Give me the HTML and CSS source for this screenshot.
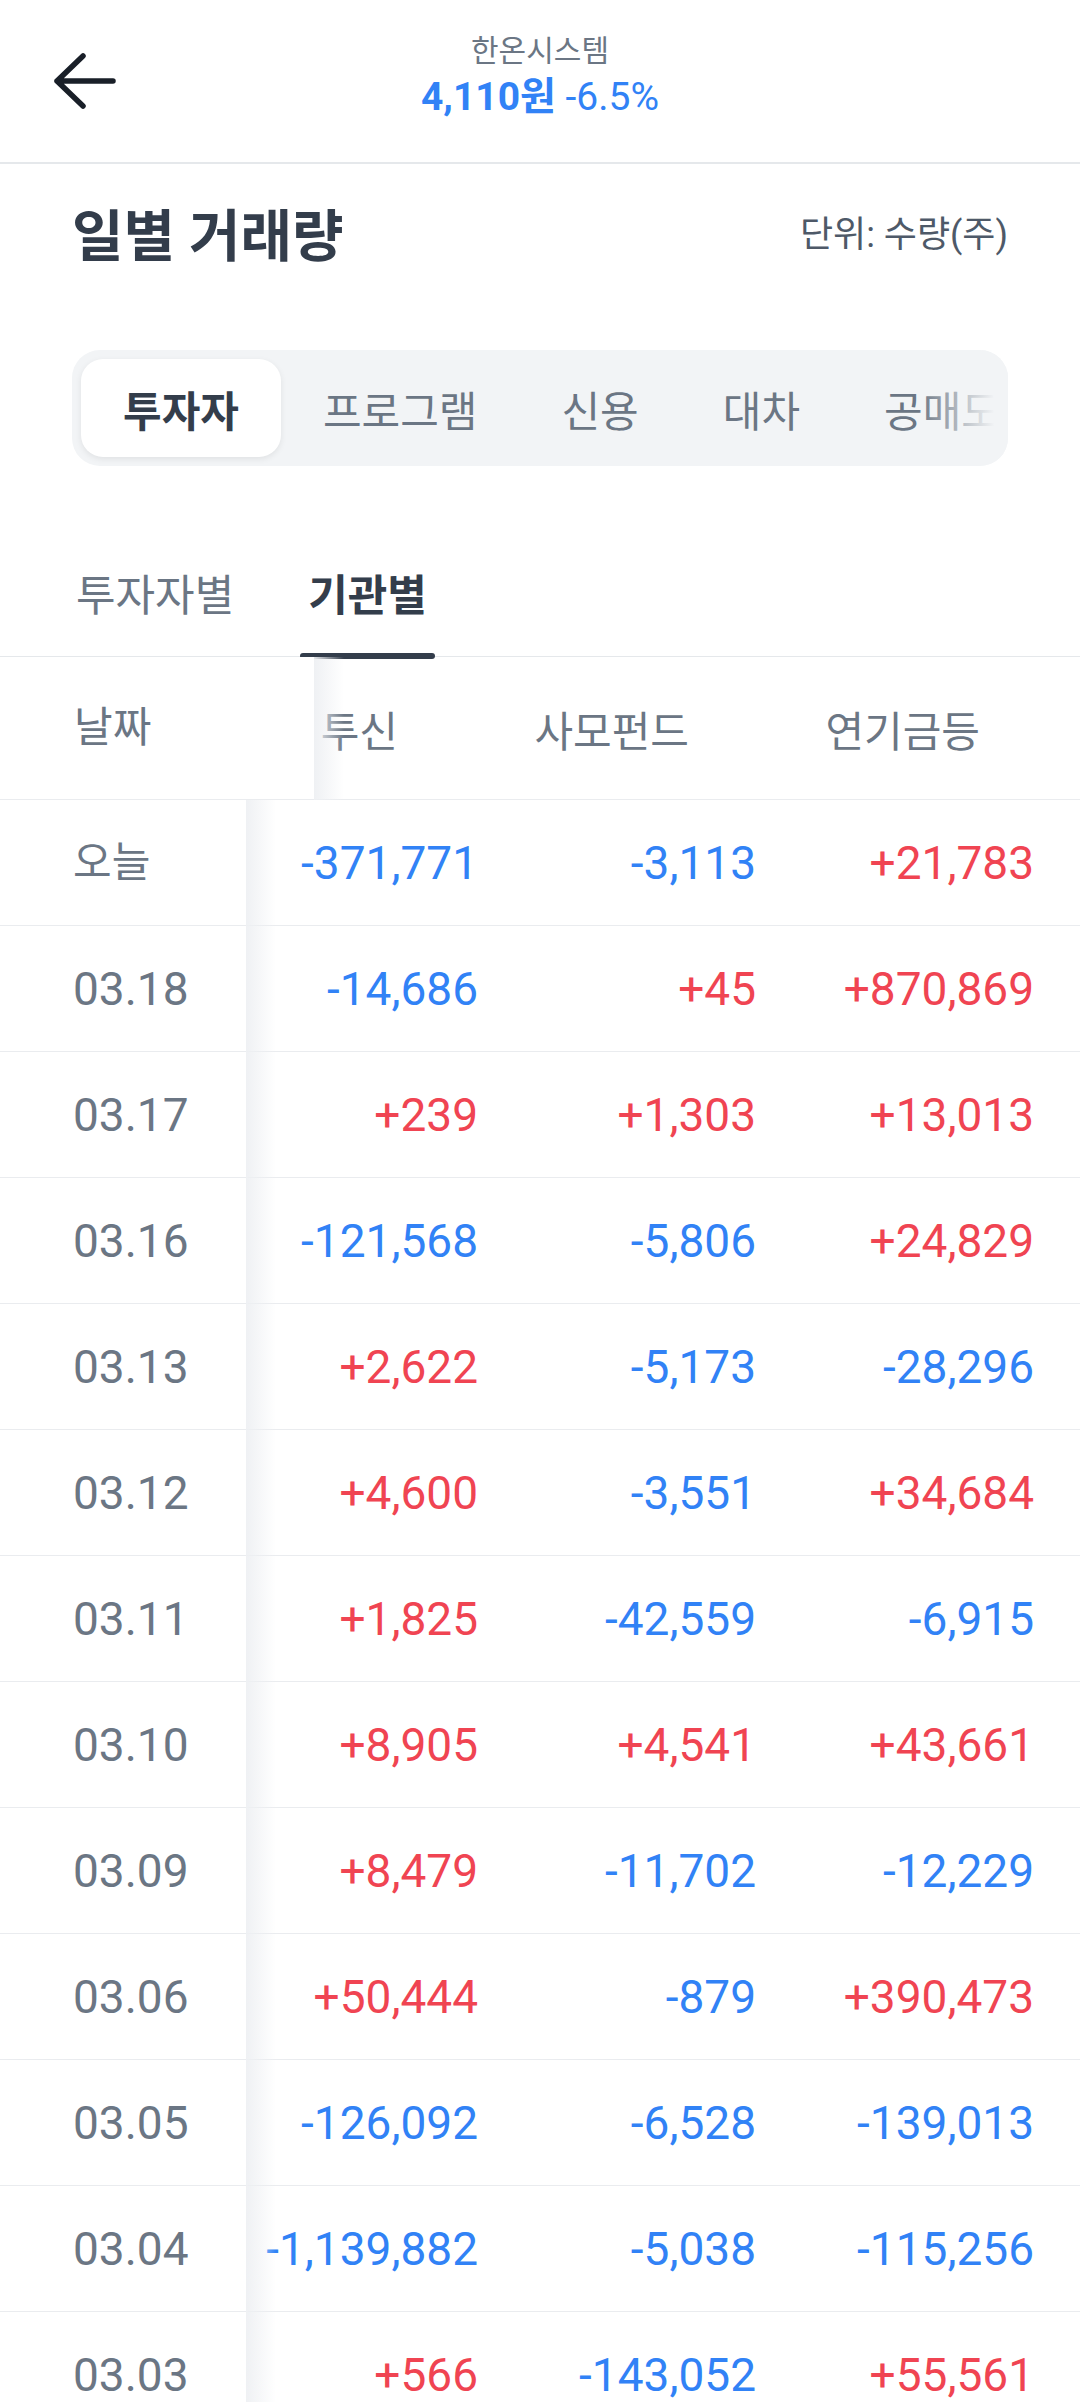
FILE: index.html
```html
<!DOCTYPE html>
<html lang="ko">
<head>
    <meta charset="UTF-8">
    <meta name="viewport" content="width=device-width, initial-scale=1.0">
    <title>한온시스템 - 일별 거래량</title>
    <link rel="stylesheet" href="styles.css">
</head>
<body>
    <header class="topbar">
        <div class="topbar-left">
            <svg class="back" width="64" height="58" viewBox="0 0 64 58">
                <path d="M29 4 L3 29 L29 54 M3 29 H59" fill="none" stroke="#191f28" stroke-width="5.5" stroke-linecap="round" stroke-linejoin="round"/>
            </svg>
        </div>
        <div class="topbar-title">
            <div class="stock-name">한온시스템</div>
            <div class="stock-price"><b>4,110원</b> -6.5%</div>
        </div>
        <div></div>
    </header>

    <section class="title-row">
        <h1>일별 거래량</h1>
        <span class="unit">단위: 수량(주)</span>
    </section>

    <div class="segment">
        <div class="segment-list">
            <button class="seg active">투자자</button>
            <button class="seg">프로그램</button>
            <button class="seg">신용</button>
            <button class="seg">대차</button>
            <button class="seg">공매도</button>
        </div>
    </div>

    <nav class="subtabs">
        <span class="subtab">투자자별</span>
        <span class="subtab active">기관별</span>
    </nav>

    <div class="table">
        <div class="thead">
            <div class="date">날짜</div>
            <div class="cols">
                <span>투신</span>
                <span>사모펀드</span>
                <span>연기금등</span>
            </div>
        </div>

        <div class="row">
            <div class="date today">오늘</div>
            <div class="vals"><span class="down">-371,771</span><span class="down">-3,113</span><span class="up">+21,783</span></div>
        </div>
        <div class="row">
            <div class="date">03.18</div>
            <div class="vals"><span class="down">-14,686</span><span class="up">+45</span><span class="up">+870,869</span></div>
        </div>
        <div class="row">
            <div class="date">03.17</div>
            <div class="vals"><span class="up">+239</span><span class="up">+1,303</span><span class="up">+13,013</span></div>
        </div>
        <div class="row">
            <div class="date">03.16</div>
            <div class="vals"><span class="down">-121,568</span><span class="down">-5,806</span><span class="up">+24,829</span></div>
        </div>
        <div class="row">
            <div class="date">03.13</div>
            <div class="vals"><span class="up">+2,622</span><span class="down">-5,173</span><span class="down">-28,296</span></div>
        </div>
        <div class="row">
            <div class="date">03.12</div>
            <div class="vals"><span class="up">+4,600</span><span class="down">-3,551</span><span class="up">+34,684</span></div>
        </div>
        <div class="row">
            <div class="date">03.11</div>
            <div class="vals"><span class="up">+1,825</span><span class="down">-42,559</span><span class="down">-6,915</span></div>
        </div>
        <div class="row">
            <div class="date">03.10</div>
            <div class="vals"><span class="up">+8,905</span><span class="up">+4,541</span><span class="up">+43,661</span></div>
        </div>
        <div class="row">
            <div class="date">03.09</div>
            <div class="vals"><span class="up">+8,479</span><span class="down">-11,702</span><span class="down">-12,229</span></div>
        </div>
        <div class="row">
            <div class="date">03.06</div>
            <div class="vals"><span class="up">+50,444</span><span class="down">-879</span><span class="up">+390,473</span></div>
        </div>
        <div class="row">
            <div class="date">03.05</div>
            <div class="vals"><span class="down">-126,092</span><span class="down">-6,528</span><span class="down">-139,013</span></div>
        </div>
        <div class="row">
            <div class="date">03.04</div>
            <div class="vals"><span class="down">-1,139,882</span><span class="down">-5,038</span><span class="down">-115,256</span></div>
        </div>
        <div class="row">
            <div class="date">03.03</div>
            <div class="vals"><span class="up">+566</span><span class="down">-143,052</span><span class="up">+55,561</span></div>
        </div>
    </div>
</body>
</html>
```

FILE: styles.css
```css
* {
    margin: 0;
    padding: 0;
    box-sizing: border-box;
}

body {
    font-family: Roboto, "Noto Sans CJK KR", sans-serif;
    background: #fff;
    color: #333d4b;
    overflow: hidden;
}

/* top bar */
.topbar {
    display: grid;
    grid-template-columns: 1fr auto 1fr;
    height: 164px;
    border-bottom: 2px solid #e5e8eb;
}

.topbar-left {
    display: flex;
    align-items: center;
    padding-left: 54px;
}

.topbar-title {
    padding-top: 30px;
    text-align: center;
}

.stock-name {
    font-size: 30px;
    line-height: 42px;
    color: #6b7684;
}

.stock-price {
    font-size: 39px;
    line-height: 50px;
    color: #3182f6;
}

.stock-price b {
    font-weight: 700;
}

/* title */
.title-row {
    display: flex;
    justify-content: space-between;
    align-items: center;
    height: 70px;
    margin-top: 32px;
    padding: 0 72px 0 72px;
}

.title-row h1 {
    font-size: 56px;
    font-weight: 700;
    color: #333d4b;
}

.unit {
    font-size: 36px;
    color: #4e5968;
}

/* segment control */
.segment {
    position: relative;
    margin: 84px 72px 0 72px;
    height: 116px;
    padding: 9px;
    background: #f2f4f6;
    border-radius: 28px;
    overflow: hidden;
}

.segment::after {
    content: '';
    position: absolute;
    top: 0;
    right: 0;
    bottom: 0;
    width: 90px;
    background: linear-gradient(to right, rgba(242, 244, 246, 0), #f2f4f6 85%);
}

.segment-list {
    display: flex;
    height: 98px;
}

.seg {
    flex: none;
    border: none;
    background: none;
    padding: 0 42px;
    font-family: inherit;
    font-size: 42px;
    color: #6b7684;
    border-radius: 22px;
}

.seg.active {
    background: #fff;
    color: #333d4b;
    font-weight: 700;
    box-shadow: 0 2px 6px rgba(0, 0, 0, 0.08);
}

/* sub tabs */
.subtabs {
    display: flex;
    gap: 58px;
    margin-top: 105px;
    padding-left: 68px;
    border-bottom: 1px solid #e5e8eb;
}

.subtab {
    position: relative;
    padding: 0 8px 35px 8px;
    font-size: 43px;
    line-height: 50px;
    color: #6b7684;
}

.subtab.active {
    color: #333d4b;
    font-weight: 700;
}

.subtab.active::after {
    content: '';
    position: absolute;
    left: 0;
    right: 0;
    bottom: -3px;
    height: 6px;
    border-radius: 3px;
    background: #333d4b;
}

/* table */
.thead,
.row {
    display: flex;
    border-bottom: 1px solid #eaecef;
}

.thead {
    height: 143px;
}

.row {
    height: 126px;
}

.date {
    flex: none;
    position: relative;
    z-index: 1;
    display: flex;
    align-items: center;
    width: 246px;
    padding-left: 73px;
    background: #fff;
    font-size: 46px;
    line-height: 1;
    color: #6b7684;
}

.date::after {
    content: '';
    position: absolute;
    top: 0;
    bottom: -1px;
    left: 100%;
    width: 30px;
    background: linear-gradient(to right, rgba(238, 240, 243, 0.95), rgba(255, 255, 255, 0));
}

.date.today {
    font-size: 42px;
}

.thead .date {
    width: 314px;
    padding-left: 74px;
    font-size: 42px;
}

.cols,
.vals {
    display: flex;
}

.cols {
    margin-left: -207px;
}

.cols span {
    display: flex;
    align-items: center;
    justify-content: flex-end;
    width: 291px;
    font-size: 42px;
    color: #6b7684;
}

.vals {
    margin-left: -46px;
}

.vals span {
    display: flex;
    align-items: center;
    justify-content: flex-end;
    width: 278px;
    font-size: 46px;
    line-height: 1;
}

.up {
    color: #f04452;
}

.down {
    color: #3182f6;
}
```
